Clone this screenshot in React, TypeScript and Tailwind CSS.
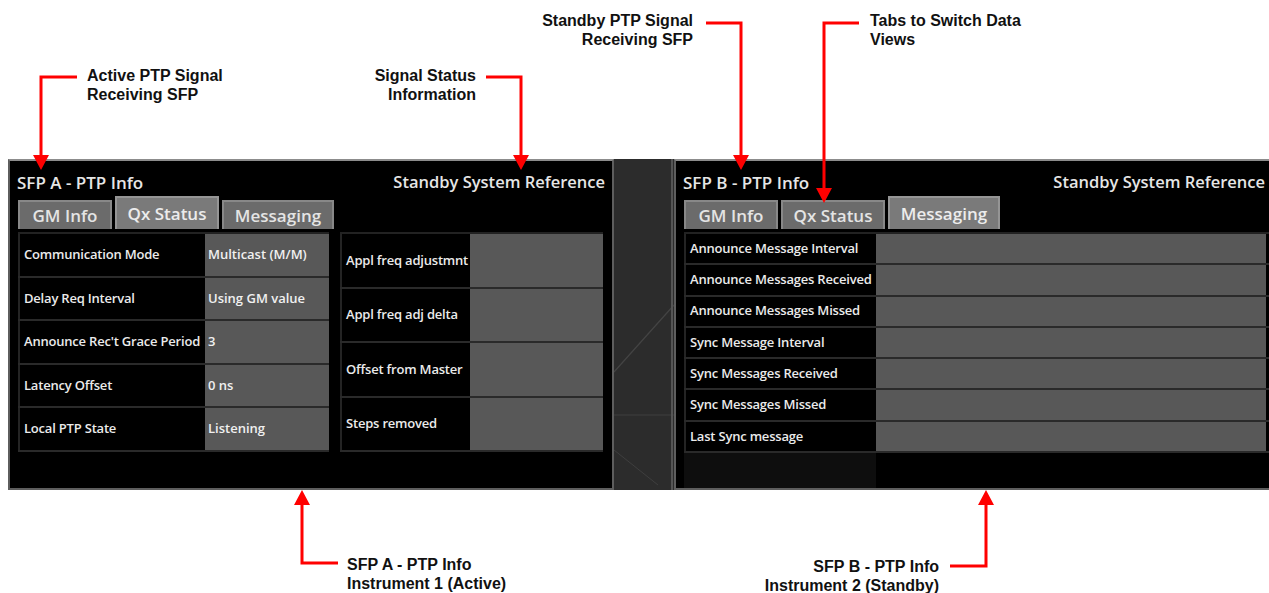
import React from 'react'

type Row = { label: string; value?: string }

const QX_LEFT: Row[] = [
  { label: 'Communication Mode', value: 'Multicast (M/M)' },
  { label: 'Delay Req Interval', value: 'Using GM value' },
  { label: "Announce Rec't Grace Period", value: '3' },
  { label: 'Latency Offset', value: '0 ns' },
  { label: 'Local PTP State', value: 'Listening' },
]

const QX_RIGHT: Row[] = [
  { label: 'Appl freq adjustmnt' },
  { label: 'Appl freq adj delta' },
  { label: 'Offset from Master' },
  { label: 'Steps removed' },
]

const MESSAGING: Row[] = [
  { label: 'Announce Message Interval' },
  { label: 'Announce Messages Received' },
  { label: 'Announce Messages Missed' },
  { label: 'Sync Message Interval' },
  { label: 'Sync Messages Received' },
  { label: 'Sync Messages Missed' },
  { label: 'Last Sync message' },
]

const TABS = [
  { name: 'GM Info', w: 'w-[94px]' },
  { name: 'Qx Status', w: 'w-[104px]' },
  { name: 'Messaging', w: 'w-[112px]' },
]

function Tabs({ active }: { active: string }) {
  return (
    <div className="flex items-end gap-[3px] h-[32px] pl-[8px]">
      {TABS.map(t =>
        t.name === active ? (
          <div
            key={t.name}
            className={`${t.w} h-[33px] flex items-center justify-center bg-[#7a7a7a] border-2 border-b-0 border-[#959595] text-[17px] text-[#ececec]`}
          >
            {t.name}
          </div>
        ) : (
          <div
            key={t.name}
            className={`${t.w} h-[29px] flex items-center justify-center bg-[#6b6b6b] border-2 border-b-0 border-[#888888] text-[17px] text-[#e4e4e4]`}
          >
            {t.name}
          </div>
        )
      )}
    </div>
  )
}

function DataTable({ rows, labelW, valueW, rowH }: { rows: Row[]; labelW: string; valueW: string; rowH: string }) {
  return (
    <div className="flex flex-col border-t-2 border-[#222]">
      {rows.map(r => (
        <div key={r.label} className={`flex ${rowH} border-b-2 border-[#2a2a2a]`}>
          <div className={`${labelW} flex items-center pl-[4px] bg-black border-l-2 border-[#242424] text-[13px] text-[#ebebeb] whitespace-nowrap tracking-[-0.2px]`}>
            {r.label}
          </div>
          <div className={`${valueW} flex items-center pl-[3px] bg-[#585858] text-[13px] text-[#f0f0f0] whitespace-nowrap`}>
            {r.value}
          </div>
        </div>
      ))}
    </div>
  )
}

function Panel({ title, active, w, children }: { title: string; active: string; w: string; children: React.ReactNode }) {
  return (
    <div className={`${w} h-[331px] shrink-0 flex flex-col bg-black border-2 border-[#5e5e5e] border-t-[#8c8c8c] font-['Open_Sans',sans-serif] font-semibold`}>
      <div className="h-[36px] flex items-start justify-between pt-[9px] pl-[7px] pr-[7px] text-[17px] text-[#e6e6e6] whitespace-nowrap">
        <span>{title}</span>
        <span className="text-[16.5px]">Standby System Reference</span>
      </div>
      <Tabs active={active} />
      <div className="flex-1 flex flex-col pt-[3px] pl-[8px]">{children}</div>
    </div>
  )
}

function Gap() {
  return (
    <div className="w-[60px] h-[331px] shrink-0 bg-[#2c2c2c]">
      <svg width="60" height="331" viewBox="0 0 60 331">
        <line x1="0" y1="213" x2="60" y2="146" stroke="#444" strokeWidth="1.2" />
        <line x1="0" y1="256" x2="60" y2="256" stroke="#3f3f3f" strokeWidth="1.2" />
        <line x1="0" y1="291" x2="44" y2="326" stroke="#3f3f3f" strokeWidth="1" />
        <line x1="58" y1="0" x2="58" y2="331" stroke="#555" strokeWidth="2" />
      </svg>
    </div>
  )
}

function Note({ pos, align, lines }: { pos: string; align: string; lines: string[] }) {
  return (
    <div className={`absolute ${pos} ${align} font-['Liberation_Sans',Arial,sans-serif] font-bold text-[16px] leading-[19px] text-[#111] whitespace-nowrap`}>
      {lines.map(l => (
        <div key={l}>{l}</div>
      ))}
    </div>
  )
}

function Arrow({ x, tip, up }: { x: number; tip: number; up?: boolean }) {
  const b = up ? tip + 15 : tip - 15
  return <polygon points={`${x},${tip} ${x - 8},${b} ${x + 8},${b}`} fill="#ff0000" />
}

export default function App() {
  return (
    <div className="relative w-[1269px] h-[593px] overflow-hidden bg-white">
      <div className="flex pt-[159px] pl-[8px]">
        <Panel title="SFP A - PTP Info" active="Qx Status" w="w-[606px]">
          <div className="flex gap-[11px]">
            <DataTable rows={QX_LEFT} labelW="w-[187px]" valueW="w-[124px]" rowH="h-[43.6px]" />
            <DataTable rows={QX_RIGHT} labelW="w-[130px]" valueW="w-[133px]" rowH="h-[54.5px]" />
          </div>
        </Panel>
        <Gap />
        <Panel title="SFP B - PTP Info" active="Messaging" w="w-[600px]">
          <DataTable rows={MESSAGING} labelW="w-[192px]" valueW="w-[390px]" rowH="h-[31.3px]" />
          <div className="flex flex-1">
            <div className="w-[192px] bg-[#0e0e0e]" />
          </div>
        </Panel>
      </div>

      <svg className="absolute inset-0 pointer-events-none" width="1269" height="593" viewBox="0 0 1269 593">
        <g fill="none" stroke="#ff0000" strokeWidth="3">
          <polyline points="77,77 41,77 41,157" />
          <polyline points="486,77 521,77 521,157" />
          <polyline points="706,23 741,23 741,157" />
          <polyline points="859,23 824,23 824,190" />
          <polyline points="302,503 302,563 338,563" />
          <polyline points="986,503 986,566 950,566" />
        </g>
        <Arrow x={41} tip={170} />
        <Arrow x={521} tip={170} />
        <Arrow x={741} tip={170} />
        <Arrow x={824} tip={203} />
        <Arrow x={302} tip={490} up />
        <Arrow x={986} tip={490} up />
      </svg>

      <Note pos="left-[87px] top-[66px]" align="text-left" lines={['Active PTP Signal', 'Receiving SFP']} />
      <Note pos="right-[793px] top-[66px]" align="text-right" lines={['Signal Status', 'Information']} />
      <Note pos="right-[576px] top-[11px]" align="text-right" lines={['Standby PTP Signal', 'Receiving SFP']} />
      <Note pos="left-[870px] top-[11px]" align="text-left" lines={['Tabs to Switch Data', 'Views']} />
      <Note pos="left-[347px] top-[555px]" align="text-left" lines={['SFP A - PTP Info', 'Instrument 1 (Active)']} />
      <Note pos="right-[330px] top-[557px]" align="text-right" lines={['SFP B - PTP Info', 'Instrument 2 (Standby)']} />
    </div>
  )
}
